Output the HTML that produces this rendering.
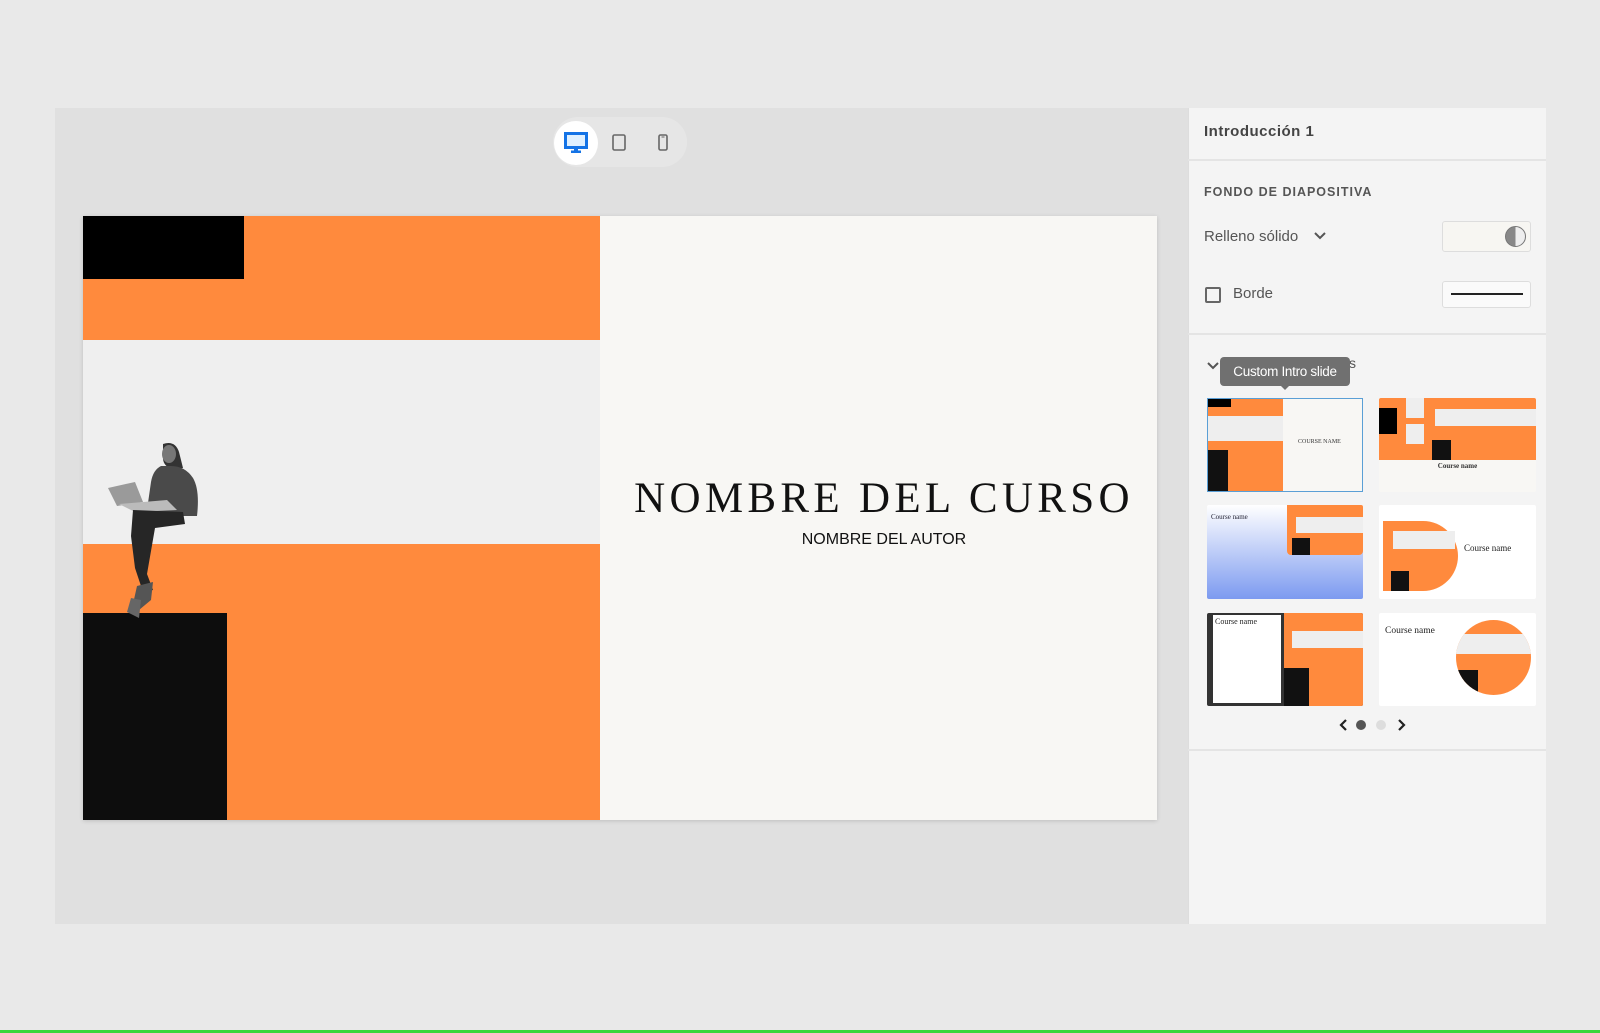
<!DOCTYPE html>
<html><head><meta charset="utf-8"><style>
*{margin:0;padding:0;box-sizing:border-box}
body{width:1600px;height:1033px;background:#e9e9e9;position:relative;overflow:hidden;font-family:"Liberation Sans",sans-serif}
.a{position:absolute}
.t{font-family:"Liberation Sans",sans-serif;color:#444}
</style></head><body>
<div class="a" style="left:55px;top:108px;width:1133px;height:816px;background:#e0e0e0"></div>
<!-- toolbar -->
<div class="a" style="left:553px;top:117px;width:134px;height:50px;border-radius:25px;background:#e6e6e6"></div>
<div class="a" style="left:554px;top:121px;width:44px;height:44px;border-radius:22px;background:#fff"></div>
<svg class="a" style="left:564px;top:132px" width="24" height="22" viewBox="0 0 24 22"><rect x="1.5" y="1.5" width="21" height="14" fill="#dff0ff" stroke="#1473e6" stroke-width="3"/><rect x="10" y="16" width="4" height="3" fill="#1473e6"/><rect x="7" y="18.5" width="10" height="2.5" fill="#1473e6"/></svg>
<svg class="a" style="left:612px;top:134px" width="14" height="17"><rect x="1" y="1" width="12" height="15" rx="1.5" fill="none" stroke="#666" stroke-width="1.6"/></svg>
<svg class="a" style="left:658px;top:134px" width="10" height="17"><rect x="1" y="1" width="8" height="15" rx="1.5" fill="none" stroke="#666" stroke-width="1.6"/><line x1="3.5" y1="3" x2="6.5" y2="3" stroke="#666"/></svg>
<!-- slide -->
<div class="a" style="left:83px;top:216px;width:1074px;height:604px;background:#f8f7f4;box-shadow:0 1px 4px rgba(0,0,0,.15)"></div>
<div class="a" style="left:83px;top:216px;width:517px;height:124px;background:#ff8a3d"></div>
<div class="a" style="left:83px;top:216px;width:161px;height:63px;background:#000"></div>
<div class="a" style="left:83px;top:340px;width:517px;height:204px;background:#efefef"></div>
<div class="a" style="left:83px;top:544px;width:517px;height:276px;background:#ff8a3d"></div>
<div class="a" style="left:83px;top:613px;width:144px;height:207px;background:#0d0d0d"></div>
<!-- person -->
<svg class="a" style="left:105px;top:440px" width="100" height="182" viewBox="0 0 100 182">
<path d="M58 4 Q70 0 74 12 L78 28 L68 30 Q58 26 58 18 Z" fill="#333"/>
<ellipse cx="64" cy="14" rx="7" ry="9" fill="#777"/>
<path d="M56 26 Q48 30 46 42 L42 70 Q52 78 72 76 L92 76 Q95 50 88 38 Q80 26 66 26 Z" fill="#4a4a4a"/>
<path d="M3 48 L30 42 L38 62 L12 66 Z" fill="#9a9a9a"/>
<path d="M14 64 L62 60 L72 70 L30 72 Z" fill="#bbb"/>
<path d="M28 70 L78 72 L80 84 L50 88 L42 134 L48 150 L38 152 L30 128 L26 96 Z" fill="#262626"/>
<path d="M32 146 L48 142 L46 160 L34 170 L28 164 Z" fill="#555"/>
<path d="M26 158 L36 160 L34 178 L22 172 Z" fill="#666"/>
</svg>
<div class="a" style="left:0;top:474px;width:1768px;text-align:center;font-family:'Liberation Serif',serif;font-size:43px;letter-spacing:4.3px;color:#111">NOMBRE DEL CURSO</div>
<div class="a" style="left:0;top:531px;width:1768px;text-align:center;font-size:16px;color:#111">NOMBRE DEL AUTOR</div>
<!-- right panel -->
<div class="a" style="left:1188px;top:108px;width:358px;height:816px;background:#f4f4f4;border-left:1px solid #ddd"></div>
<div class="a t" style="left:1204px;top:123px;font-size:15px;font-weight:bold;color:#444;letter-spacing:.5px">Introducción 1</div>
<div class="a" style="left:1188px;top:159px;width:358px;height:2px;background:#e4e4e4"></div>
<div class="a t" style="left:1204px;top:185px;font-size:12.5px;font-weight:bold;letter-spacing:1px;color:#555">FONDO DE DIAPOSITIVA</div>
<div class="a t" style="left:1204px;top:228px;font-size:15px;color:#555">Relleno sólido</div>
<svg class="a" style="left:1314px;top:232px" width="12" height="8"><path d="M1 1 L6 6 L11 1" fill="none" stroke="#555" stroke-width="2"/></svg>
<div class="a" style="left:1442px;top:221px;width:89px;height:31px;border:1px solid #ddd;border-radius:3px;background:#f7f6f2"></div>
<div class="a" style="left:1505px;top:226px;width:21px;height:21px;border-radius:50%;background:conic-gradient(#eee 0 50%,#888 50% 100%);border:1px solid #777"></div>
<div class="a" style="left:1205px;top:287px;width:16px;height:16px;border:2px solid #666;border-radius:2px"></div>
<div class="a t" style="left:1233px;top:285px;font-size:15px;color:#555">Borde</div>
<div class="a" style="left:1442px;top:281px;width:89px;height:27px;border:1px solid #ddd;border-radius:3px;background:#fafafa"></div>
<div class="a" style="left:1451px;top:293px;width:72px;height:2px;background:#222"></div>
<div class="a" style="left:1188px;top:333px;width:358px;height:2px;background:#e4e4e4"></div>
<svg class="a" style="left:1207px;top:362px" width="12" height="8"><path d="M1 1 L6 6 L11 1" fill="none" stroke="#555" stroke-width="2"/></svg>
<div class="a t" style="left:1349px;top:355px;font-size:14px;color:#555">s</div>
<div class="a" style="left:1220px;top:357px;width:130px;height:29px;background:#707070;border-radius:4px;color:#fff;font-size:13.5px;text-align:center;line-height:29px;letter-spacing:-.3px">Custom Intro slide</div>
<div class="a" style="left:1280px;top:385px;border:5px solid transparent;border-top-color:#707070;border-bottom:0"></div>
<!-- thumb 1 -->
<div class="a" style="left:1207px;top:398px;width:156px;height:94px;background:#f8f7f4;border:1px solid #5a9fd6;overflow:hidden">
<div class="a" style="left:0;top:0;width:75px;height:17px;background:#ff8a3d"></div>
<div class="a" style="left:0;top:0;width:23px;height:8px;background:#000"></div>
<div class="a" style="left:0;top:17px;width:75px;height:25px;background:#eee"></div>
<div class="a" style="left:0;top:42px;width:75px;height:52px;background:#ff8a3d"></div>
<div class="a" style="left:0;top:51px;width:20px;height:43px;background:#111"></div>
<div class="a" style="left:90px;top:40px;font-family:'Liberation Serif',serif;font-size:6px;color:#333">COURSE NAME</div>
</div>
<!-- thumb 2 -->
<div class="a" style="left:1379px;top:398px;width:157px;height:94px;background:#f8f7f4;overflow:hidden;border-radius:2px">
<div class="a" style="left:0;top:0;width:157px;height:62px;background:#ff8a3d"></div>
<div class="a" style="left:0;top:10px;width:18px;height:26px;background:#000"></div>
<div class="a" style="left:27px;top:0;width:18px;height:20px;background:#eee"></div>
<div class="a" style="left:27px;top:26px;width:18px;height:20px;background:#eee"></div>
<div class="a" style="left:56px;top:11px;width:101px;height:17px;background:#eee"></div>
<div class="a" style="left:53px;top:42px;width:19px;height:20px;background:#111"></div>
<div class="a" style="left:0;top:64px;width:157px;text-align:center;font-family:'Liberation Serif',serif;font-weight:bold;font-size:7px;color:#333">Course name</div>
</div>
<!-- thumb 3 -->
<div class="a" style="left:1207px;top:505px;width:156px;height:94px;background:linear-gradient(#fff,#7c9af0);overflow:hidden;border-radius:2px">
<div class="a" style="left:80px;top:0;width:76px;height:50px;background:#ff8a3d;border-radius:0 0 4px 4px"></div>
<div class="a" style="left:89px;top:12px;width:67px;height:16px;background:#eee"></div>
<div class="a" style="left:85px;top:33px;width:18px;height:17px;background:#111"></div>
<div class="a" style="left:4px;top:8px;font-family:'Liberation Serif',serif;font-size:7px;color:#223">Course name</div>
</div>
<!-- thumb 4 -->
<div class="a" style="left:1379px;top:505px;width:157px;height:94px;background:#fff;overflow:hidden;border-radius:2px">
<div class="a" style="left:4px;top:16px;width:75px;height:70px;background:#ff8a3d;border-radius:0 35px 35px 0"></div>
<div class="a" style="left:14px;top:26px;width:62px;height:18px;background:#eee"></div>
<div class="a" style="left:12px;top:66px;width:18px;height:20px;background:#111"></div>
<div class="a" style="left:85px;top:38px;font-family:'Liberation Serif',serif;font-size:9px;color:#222">Course name</div>
</div>
<!-- thumb 5 -->
<div class="a" style="left:1207px;top:613px;width:156px;height:93px;background:#333;overflow:hidden;border-radius:2px">
<div class="a" style="left:6px;top:2px;width:68px;height:88px;background:#fff"></div>
<div class="a" style="left:77px;top:0;width:79px;height:93px;background:#ff8a3d"></div>
<div class="a" style="left:85px;top:18px;width:71px;height:17px;background:#eee"></div>
<div class="a" style="left:77px;top:55px;width:25px;height:38px;background:#111"></div>
<div class="a" style="left:8px;top:4px;font-family:'Liberation Serif',serif;font-size:8px;color:#222">Course name</div>
</div>
<!-- thumb 6 -->
<div class="a" style="left:1379px;top:613px;width:157px;height:93px;background:#fff;overflow:hidden;border-radius:2px">
<div class="a" style="left:77px;top:7px;width:75px;height:75px;border-radius:50%;background:#ff8a3d;overflow:hidden">
<div class="a" style="left:0;top:14px;width:75px;height:20px;background:#eee"></div>
<div class="a" style="left:0;top:50px;width:22px;height:25px;background:#111"></div></div>
<div class="a" style="left:6px;top:13px;font-family:'Liberation Serif',serif;font-size:9.5px;color:#222">Course name</div>
</div>
<!-- pagination -->
<svg class="a" style="left:1339px;top:719px" width="9" height="12"><path d="M7 1 L2 6 L7 11" fill="none" stroke="#222" stroke-width="2.2"/></svg>
<div class="a" style="left:1356px;top:720px;width:10px;height:10px;border-radius:50%;background:#555"></div>
<div class="a" style="left:1376px;top:720px;width:10px;height:10px;border-radius:50%;background:#ddd"></div>
<svg class="a" style="left:1397px;top:719px" width="9" height="12"><path d="M2 1 L7 6 L2 11" fill="none" stroke="#222" stroke-width="2.2"/></svg>
<div class="a" style="left:1188px;top:749px;width:358px;height:2px;background:#e4e4e4"></div>
<div class="a" style="left:0;top:1030px;width:1600px;height:3px;background:#3bd63b"></div>
</body></html>
